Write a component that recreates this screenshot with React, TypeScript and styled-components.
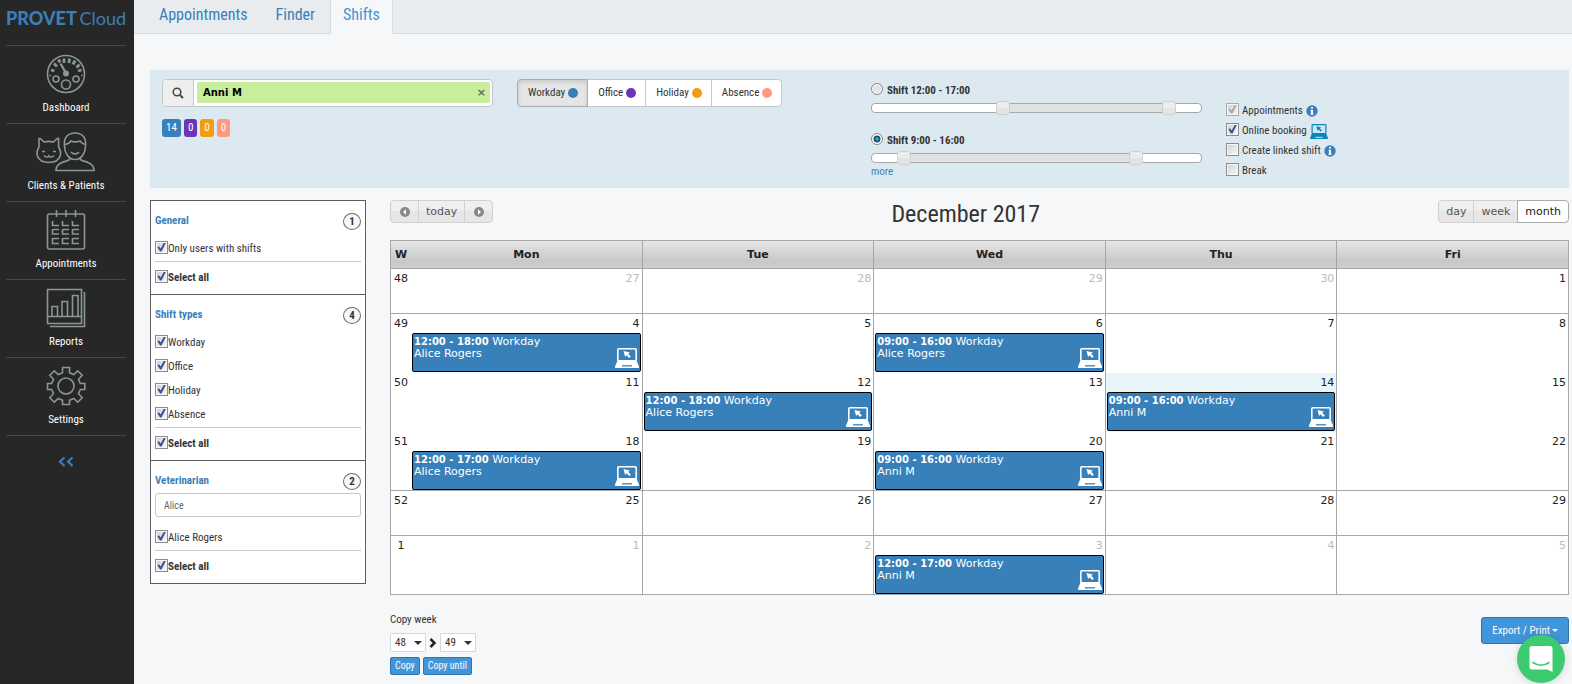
import React, { useState } from "react";
import styled, { createGlobalStyle, css } from "styled-components";

const condensed = '"Roboto Condensed", "Liberation Sans Narrow", Roboto, sans-serif';
const wide = 'Verdana, "DejaVu Sans", sans-serif';

const GlobalStyle = createGlobalStyle`
  *, *::before, *::after { box-sizing: border-box; }
  body { margin: 0; background: #f5f7f9; color: #333; font: 11px/16px ${condensed}; }
  button, input, select { font: inherit; color: inherit; margin: 0; }
  a { color: #3a7fb9; text-decoration: none; }
`;

const Page = styled.div`
  display: flex;
  min-height: 100vh;
`;

/* ---------- sidebar ---------- */

const Sidebar = styled.nav`
  flex: 0 0 134px;
  min-width: 0;
  padding: 0 8px 0 6px;
  background: #272727;
`;

const Logo = styled.a`
  display: flex;
  align-items: center;
  justify-content: space-between;
  height: 45px;
  padding-bottom: 9px;
  font: 900 18px/20px Lato, sans-serif;
`;

const LogoLight = styled.span`
  font-weight: 400;
`;

const NavItem = styled.a`
  display: flex;
  flex-direction: column;
  align-items: center;
  height: 78px;
  padding-top: 8px;
  border-top: 1px solid #484848;
  color: #fff;

  svg { margin-bottom: 6px; }
`;

const Collapse = styled.button`
  display: flex;
  justify-content: center;
  width: 100%;
  padding: 21px 0;
  border: 0;
  border-top: 1px solid #484848;
  background: none;
  color: #3a7fb9;
`;

/* ---------- top tabs ---------- */

const Main = styled.div`
  flex: 1;
  min-width: 0;
`;

const Tabs = styled.div`
  display: flex;
  height: 34px;
  padding-left: 11px;
  border-bottom: 1px solid #dadcde;
  background: #e9ecee;
`;

const Tab = styled.a<{ $active?: boolean }>`
  height: 34px;
  padding: 4px 14px;
  font-size: 16px;
  line-height: 21px;
  ${(p) =>
    p.$active &&
    css`
      margin-left: 1px;
      padding: 4px 12px;
      border: solid #dadcde;
      border-width: 0 1px;
      background: #f5f7f9;
      color: #4295d6;
    `}
`;

const Content = styled.div`
  padding: 36px 3px 8px 16px;
`;

/* ---------- filter bar ---------- */

const FilterBar = styled.section`
  display: flex;
  height: 118px;
  padding: 9px 12px;
  background: #dde9f1;
`;

const SearchColumn = styled.div`
  width: 331px;
  margin-right: 24px;
`;

const SearchGroup = styled.div`
  display: flex;
  height: 28px;
  border: 1px solid #c5c7c9;
  border-radius: 4px;
  background: #fff;
  overflow: hidden;
`;

const SearchAddon = styled.span`
  display: flex;
  align-items: center;
  justify-content: center;
  width: 31px;
  border-right: 1px solid #c5c7c9;
  background: #eee;
`;

const SearchTag = styled.div`
  flex: 1;
  display: flex;
  align-items: center;
  justify-content: space-between;
  margin: 2px 2px 3px 3px;
  padding: 0 4px 0 6px;
  border-radius: 2px;
  background: #c8ed9b;
  color: #000;
  font: bold 10px/16px ${wide};
`;

const TagRemove = styled.button`
  padding: 0;
  border: 0;
  background: none;
  color: #666;
  font: bold 11px/14px ${wide};
`;

const Counters = styled.div`
  display: flex;
  gap: 3px;
  margin-top: 12px;
`;

const Counter = styled.span<{ $color: string }>`
  padding: 1px 4px;
  text-align: center;
  border-radius: 3px;
  background: ${(p) => p.$color};
  color: #fff;
`;

const TypeGroup = styled.div`
  display: flex;
  height: 28px;
`;

const TypeButton = styled.button<{ $active?: boolean }>`
  display: flex;
  align-items: center;
  gap: 3px;
  padding: 0 9px 0 10px;
  border: 1px solid #c5c7c9;
  background: #fff;
  & + & { margin-left: -1px; }
  &:first-child { border-radius: 4px 0 0 4px; }
  &:last-child { border-radius: 0 4px 4px 0; }
  ${(p) =>
    p.$active &&
    css`
      z-index: 1;
      border-color: #a9abad;
      background: #e5e5e5;
      box-shadow: inset 0 2px 4px rgba(0, 0, 0, 0.13);
    `}
`;

const Dot = styled.span<{ $color: string }>`
  width: 10px;
  height: 10px;
  border-radius: 50%;
  background: ${(p) => p.$color};
`;

const ShiftColumn = styled.div`
  width: 331px;
  margin: 0 24px 0 auto;
`;

const ShiftLabel = styled.label`
  display: flex;
  align-items: center;
  gap: 4px;
  height: 24px;
  font-weight: bold;
`;

const Radio = styled.input.attrs({ type: "radio" })`
  appearance: none;
  width: 12px;
  height: 12px;
  margin-bottom: 4px;
  border: 1px solid #888;
  border-radius: 50%;
  background: #e4e4e4;
  box-shadow: inset 0 0 0 1px #fff;
  &:checked {
    background: radial-gradient(circle at 50% 50%, #3ba0cc 0 1px, #0b3c5c 3px, #fff 4px);
  }
`;

const SliderBox = styled.div`
  position: relative;
  height: 10px;
  border: 1px solid #a6a8aa;
  border-radius: 4px;
  background: #fff;
`;

const SliderFill = styled.div`
  height: 8px;
  background: #e1e1e1;
`;

const SliderInput = styled.input.attrs({ type: "range" })`
  appearance: none;
  position: absolute;
  top: -3px;
  left: -8px;
  width: calc(100% + 16px);
  height: 14px;
  background: none;
  pointer-events: none;
  &::-webkit-slider-thumb {
    appearance: none;
    width: 14px;
    height: 14px;
    border: 1px solid #d0d0d0;
    border-radius: 3px;
    background: linear-gradient(#ededed 50%, #e4e4e4 50%);
    pointer-events: auto;
  }
`;

const ShiftRow = styled.div`
  height: 50px;
`;

const MoreLink = styled.a`
  display: block;
  margin-top: -15px;
`;

const OptionColumn = styled.div`
  display: flex;
  flex-direction: column;
  width: 331px;
  padding-top: 22px;
`;

/* ---------- check boxes ---------- */

const CheckLabel = styled.label<{ $bold?: boolean; $spaced?: boolean }>`
  display: flex;
  flex-shrink: 0;
  align-items: center;
  gap: ${(p) => (p.$spaced ? 3 : 0)}px;
  height: ${(p) => (p.$spaced ? 20 : 24)}px;
  font-weight: ${(p) => (p.$bold ? "bold" : "normal")};
`;

const Check = styled.input.attrs({ type: "checkbox" })`
  appearance: none;
  display: flex;
  width: 13px;
  height: 13px;
  margin-bottom: 4px;
  padding: 1px;
  border: 1px solid #8a8c8e;
  background: linear-gradient(135deg, #cfd3da, #f6f6f6) content-box, #f7f7f7;
  &:checked::after {
    content: "";
    width: 9px;
    height: 9px;
    background: #3c5096;
    clip-path: polygon(4% 52%, 22% 42%, 40% 66%, 78% 0, 100% 0, 50% 100%, 34% 100%);
  }
  &:disabled { border-color: #aaa; }
  &:disabled::after { background: #aaa; }
`;

/* ---------- left panel ---------- */

const Columns = styled.div`
  display: flex;
  align-items: flex-start;
  gap: 24px;
  margin-top: 12px;
`;

const Panel = styled.aside`
  flex: 0 0 216px;
  border: 1px solid #5c5e60;
  background: #fff;
`;

const PanelSection = styled.section`
  padding: 10px 4px 4px;
  & + & { border-top: 1px solid #5c5e60; }
`;

const PanelHeading = styled.div`
  display: flex;
  align-items: center;
  justify-content: space-between;
  height: 20px;
  margin-bottom: 6px;
`;

const PanelTitle = styled.h2`
  margin: 0;
  color: #3a7fb9;
  font-size: 11px;
`;

const Count = styled.span`
  width: 18px;
  height: 17px;
  border: 1px solid #6b6b6b;
  border-radius: 50%;
  background: #f8f8f8;
  font-weight: bold;
  line-height: 15px;
  text-align: center;
`;

const PanelInput = styled.input`
  display: block;
  width: 100%;
  height: 24px;
  margin: -4px 0 9px;
  padding: 0 8px;
  border: 1px solid #c5c7c9;
  border-radius: 3px;
  background: #fff;
  color: #666;
  font-size: 10px;
`;

const Divider = styled.hr`
  margin: 0 0 4px;
  border: 0;
  border-top: 1px solid #c8c8c8;
`;

/* ---------- calendar ---------- */

const CalendarArea = styled.main`
  flex: 1;
  min-width: 0;
`;

const CalendarHeader = styled.header`
  display: flex;
  justify-content: space-between;
  height: 40px;
`;

const CalendarTitle = styled.h1`
  margin: 0;
  font-size: 24px;
  font-weight: normal;
  line-height: 28px;
`;

const ButtonSet = styled.div`
  display: flex;
  height: 23px;
`;

const SetButton = styled.button<{ $active?: boolean }>`
  padding: 0 7px;
  border: 1px solid #d0d0d0;
  background: linear-gradient(#efefef 50%, #e6e6e6 50%);
  color: #555;
  font: 11px/20px ${wide};
  & + & { margin-left: -1px; }
  &:first-child { border-radius: 4px 0 0 4px; }
  &:last-child { border-radius: 0 4px 4px 0; }
  ${(p) =>
    p.$active &&
    css`
      border-color: #aaa;
      background: #fff;
      color: #212121;
    `}
`;

const Arrow = styled(SetButton)`
  display: flex;
  align-items: center;
  justify-content: center;
  width: 29px;
`;

const Calendar = styled.table`
  width: 100%;
  table-layout: fixed;
  border: 1px solid #a5a7a9;
  border-width: 1px 0 0 1px;
  border-spacing: 0;
  background: #fff;
  font: 11px/16px ${wide};
`;

const HeadCell = styled.th<{ $week?: boolean }>`
  width: ${(p) => (p.$week ? "20px" : "auto")};
  height: 28px;
  padding: 0 ${(p) => (p.$week ? 3 : 0)}px;
  border: solid #a5a7a9;
  border-width: 0 ${(p) => (p.$week ? 0 : 1)}px 1px 0;
  background: linear-gradient(#e6e6e6, #c8c8c8 75%, #cfcfcf);
  color: #222;
`;

const WeekCell = styled.td<{ $line: boolean }>`
  padding: 2px 0 0;
  border-bottom: ${(p) => (p.$line ? "1px solid #a5a7a9" : "0")};
  color: #222;
  text-align: center;
  vertical-align: top;
`;

const DayCell = styled.td<{ $line: boolean; $today?: boolean; $tall: boolean }>`
  height: ${(p) => (p.$tall ? 59 : 45)}px;
  padding: 2px 1px 0;
  border: solid #a5a7a9;
  border-width: 0 1px ${(p) => (p.$line ? 1 : 0)}px 0;
  background: ${(p) => (p.$today ? "#e8f6fa" : "#fff")};
  vertical-align: top;
`;

const DayNumber = styled.div<{ $muted: boolean }>`
  height: 17px;
  padding-right: 1px;
  color: ${(p) => (p.$muted ? "#bbb" : "#222")};
  text-align: right;
`;

const Event = styled.a`
  display: flex;
  justify-content: space-between;
  height: 39px;
  padding: 2px 1px 0;
  border: 1px solid #000;
  border-radius: 2px;
  background: #3880ba;
  color: #fff;
  line-height: 12px;

  svg { align-self: flex-end; margin-bottom: 3px; }
`;

const EventTime = styled.b`
  font-size: 10px;
`;

const Footer = styled.footer`
  display: flex;
  justify-content: space-between;
  align-items: flex-start;
  padding-top: 17px;
`;

const ExportSlot = styled.div`
  padding-top: 5px;
`;

const CopyRow = styled.div`
  display: flex;
  align-items: center;
  gap: 3px;
  margin-top: 5px;
`;

const WeekSelect = styled.div`
  position: relative;
  display: flex;

  select {
    appearance: none;
    width: 36px;
    height: 19px;
    padding: 0 4px;
    border: 1px solid #d6d8da;
    border-radius: 1px;
    background: #fff;
  }
  svg { position: absolute; right: 4px; top: 8px; pointer-events: none; }
`;

const BlueButton = styled.button<{ $large?: boolean }>`
  display: flex;
  align-items: center;
  gap: 2px;
  height: ${(p) => (p.$large ? 27 : 18)}px;
  padding: 0 ${(p) => (p.$large ? 10 : 4)}px;
  border: 1px solid #2e76b0;
  border-radius: ${(p) => (p.$large ? 3 : 2)}px;
  background: #4295d9;
  color: #fff;
  font-size: ${(p) => (p.$large ? 11 : 10)}px;
`;

const ChatButton = styled.button`
  position: fixed;
  right: 7px;
  bottom: 1px;
  display: flex;
  align-items: center;
  justify-content: center;
  width: 48px;
  height: 48px;
  padding: 0;
  border: 0;
  border-radius: 50%;
  background: #3ecb70;
  box-shadow: 0 1px 8px rgba(0, 0, 0, 0.15);
`;

/* ---------- drawings ---------- */

const line = { fill: "none", stroke: "#8b9696", strokeWidth: 1.6 };

const DashboardIcon = () => (
  <svg width="40" height="40" viewBox="0 0 40 40" {...line}>
    <circle cx="20" cy="20" r="18.5" />
    <circle cx="20" cy="30.5" r="4.5" />
    <circle cx="10" cy="25" r="3" />
    <circle cx="30" cy="25" r="3" />
    <circle cx="20" cy="19.500" r="2.200" fill="#8b9696" />
    <path d="M20.500 20 14.500 9.500" strokeWidth="2.200" />
    <path d="M18 4.500v4.500M23.500 4.500l-.5 4.500M12.500 5.500l1.500 3M29 6.500l-2 4M8 9.500l3 3M33.500 10.500l-3 3M5 16l3.500 1M35.500 16l-3.500 1" strokeWidth="2.800" />
    <path d="M3.500 21.500h1.500M35 21.500h1.500" />
  </svg>
);

const ClientsIcon = () => (
  <svg width="60" height="40" viewBox="0 0 60 40" {...line}>
    <path d="M3 7c0-.8.700-1 1.300-.5l4 3.500c3-.9 6-.9 9 0l4-3.500c.600-.5 1.300-.3 1.300.5v8c2 3 2.500 6 1.500 9-1.500 4.500-6 6.500-11 6.500S3 28.500 1.500 24c-1-3-.5-6 1.500-9z" />
    <path d="M6 19.500h3M17 19.500h3M8 23.500c1.500 2 4 2 5 .3 1 1.700 3.500 1.700 5-.3" />
    <path d="M28.500 14c-1-8 3-13 10.500-13s11.500 5 10.500 13c0 6-3.500 13.500-10.500 13.500S28.500 20 28.500 14z" />
    <path d="M28.500 12.500c3 0 5-1.500 6.500-3.500 3 1.200 6 1.200 9 0 1.500 2 3 3 5.500 3.500M35 20c2 2.500 6 2.500 8 0" />
    <path d="M34 26.500c-.5 2.500-5 2.500-9 4.500-3.500 1.700-5 4-5 7.500h38c0-3.500-1.500-5.800-5-7.500-4-2-8.500-2-9-4.500" />
  </svg>
);

const CalendarIcon = () => (
  <svg width="40" height="40" viewBox="0 0 40 40" {...line}>
    <rect x="1.500" y="4" width="37" height="35" rx="2" />
    <path d="M10.500 0v7M20 0v7M29.500 0v7" />
    <path d="M6.500 11v4.500h6.500M16.500 11v4.500H23M26.500 11v4.500H33M6.500 19v5h6.500M16.500 19v5H23M26.500 19v5H33M6.500 28v5.500h6.500M16.500 28v5.500H23M26.500 28v5.500H33M7 19.500h6M17 19.500h6M27 19.500h6M7 28.500h6M17 28.500h6M27 28.500h6" />
  </svg>
);

const ReportsIcon = () => (
  <svg width="40" height="40" viewBox="0 0 40 40" {...line}>
    <path d="M1.500 1.500h34v34h-34zM1.500 28.500h34M38.500 4v34.500H4" />
    <path d="M6 28V18.500h5.500V28M16 28V13.500h5.500V28M26.500 28V7.500H32V28" />
  </svg>
);

const SettingsIcon = () => (
  <svg width="40" height="40" viewBox="0 0 40 40" {...line}>
    <circle cx="20" cy="20" r="8" />
    <path d="M16.500 1.500h7v5.200l4.200 1.800 4-3.700 4.500 4.500-3.700 4 1.800 4.200h4.500v6h-4.500l-1.800 4.200 3.700 4-4.500 4.500-4-3.700-4.200 1.800v4.200h-7v-4.200l-4.200-1.800-4 3.700-4.500-4.500 3.700-4-1.800-4.200H1.500v-6h4.200l1.800-4.200-3.700-4 4.500-4.500 4 3.700 4.200-1.800z" />
  </svg>
);

const LaptopIcon = ({ color, back, width = 24 }: { color: string; back: string; width?: number }) => (
  <svg width={width} height={(width * 5) / 6} viewBox="0 0 24 20" role="img" aria-label="Online booking">
    <rect x="2.800" y=".8" width="18.400" height="12" rx="1" fill={back} stroke={color} strokeWidth="1.600" />
    <path d="M2.500 12.500h19L24 18.500q.300 1.500-1 1.500H1q-1.300 0-1-1.500z" fill={color} />
    <path d="m8.500 3 6.500 1.500-1.800 1.300 2.600 2.700-1.700 1.500-2.500-2.800-1.500 1.700z" fill={color} />
    <path d="M7 17.800h10" stroke={back} strokeWidth="1.300" />
  </svg>
);

const InfoIcon = () => (
  <svg width="12" height="12" viewBox="0 0 12 12" role="img" aria-label="Info">
    <circle cx="6" cy="6" r="5.700" fill="#3a7fb9" />
    <path d="M5 2h2v1.500H5zM4.500 4.800H7V8.500h.700v1.200H4.300V8.500H5V6h-.5z" fill="#fff" />
  </svg>
);

const SearchIcon = () => (
  <svg width="12" height="12" viewBox="0 0 12 12" fill="none" stroke="#444">
    <circle cx="5" cy="5" r="3.800" strokeWidth="1.500" />
    <path d="m8 8 3 3" strokeWidth="2" />
  </svg>
);

const ArrowIcon = ({ flip }: { flip?: boolean }) => (
  <svg width="12" height="12" viewBox="0 0 12 12">
    <circle cx="6" cy="6" r="5" fill="#888" />
    <path d={flip ? "M5 3.200 8 6 5 8.800z" : "M7 3.200 4 6l3 2.800z"} fill="#fff" />
  </svg>
);

const Caret = ({ size }: { size: number }) => (
  <svg width={size} height={size / 2} viewBox="0 0 8 4">
    <path d="M0 0h8L4 4z" fill="currentColor" />
  </svg>
);

/* ---------- data ---------- */

const navItems = [
  { name: "Dashboard", Icon: DashboardIcon },
  { name: "Clients & Patients", Icon: ClientsIcon },
  { name: "Appointments", Icon: CalendarIcon },
  { name: "Reports", Icon: ReportsIcon },
  { name: "Settings", Icon: SettingsIcon },
];

const shiftTypes = [
  { name: "Workday", color: "#3880ba", count: 14 },
  { name: "Office", color: "#6a36b8", count: 0 },
  { name: "Holiday", color: "#f39c12", count: 0 },
  { name: "Absence", color: "#ff9980", count: 0 },
];

type Shift = { time: string; who: string };
type Week = { no: number; days: number[]; line: boolean; muted?: number[]; shifts?: Record<number, Shift> };

const weeks: Week[] = [
  { no: 48, days: [27, 28, 29, 30, 1], line: true, muted: [27, 28, 29, 30] },
  {
    no: 49, days: [4, 5, 6, 7, 8], line: false,
    shifts: { 4: { time: "12:00 - 18:00", who: "Alice Rogers" }, 6: { time: "09:00 - 16:00", who: "Alice Rogers" } },
  },
  {
    no: 50, days: [11, 12, 13, 14, 15], line: false,
    shifts: { 12: { time: "12:00 - 18:00", who: "Alice Rogers" }, 14: { time: "09:00 - 16:00", who: "Anni M" } },
  },
  {
    no: 51, days: [18, 19, 20, 21, 22], line: true,
    shifts: { 18: { time: "12:00 - 17:00", who: "Alice Rogers" }, 20: { time: "09:00 - 16:00", who: "Anni M" } },
  },
  { no: 52, days: [25, 26, 27, 28, 29], line: true },
  {
    no: 1, days: [1, 2, 3, 4, 5], line: true, muted: [1, 2, 3, 4, 5],
    shifts: { 3: { time: "12:00 - 17:00", who: "Anni M" } },
  },
];

/* ---------- parts ---------- */

const ShiftSlider = ({ start, end }: { start: number; end: number }) => {
  const [range, setRange] = useState([start, end]);
  return (
    <SliderBox>
      <SliderFill style={{ marginLeft: `${(range[0] - 8) * 10}%`, width: `${(range[1] - range[0]) * 10}%` }} />
      <SliderInput min={8} max={18} value={range[0]} aria-label="Start"
        onChange={(e) => setRange([Math.min(+e.target.value, range[1]), range[1]])} />
      <SliderInput min={8} max={18} value={range[1]} aria-label="End"
        onChange={(e) => setRange([range[0], Math.max(+e.target.value, range[0])])} />
    </SliderBox>
  );
};

const CheckItem = ({ children, bold }: { children: React.ReactNode; bold?: boolean }) => (
  <CheckLabel $bold={bold}>
    <Check defaultChecked />
    {children}
  </CheckLabel>
);

const PanelHead = ({ title, count }: { title: string; count: number }) => (
  <PanelHeading>
    <PanelTitle>{title}</PanelTitle>
    <Count>{count}</Count>
  </PanelHeading>
);

const WeekPicker = ({ value, label }: { value: string; label: string }) => (
  <WeekSelect>
    <select defaultValue={value} aria-label={label}>
      {["48", "49", "50", "51", "52"].map((w) => <option key={w}>{w}</option>)}
    </select>
    <Caret size={8} />
  </WeekSelect>
);

export default function App() {
  return (
    <>
      <GlobalStyle />
      <Page>
        <Sidebar>
          <Logo href="#">PROVET <LogoLight>Cloud</LogoLight></Logo>
          {navItems.map(({ name, Icon }) => (
            <NavItem href="#" key={name}><Icon />{name}</NavItem>
          ))}
          <Collapse aria-label="Collapse menu">
            <svg width="16" height="10" viewBox="0 0 16 10" fill="none" stroke="currentColor" strokeWidth="2.200">
              <path d="M6.500.500 2 4.500l4.500 4.500M14.500.500 10 4.500l4.500 4.500" />
            </svg>
          </Collapse>
        </Sidebar>

        <Main>
          <Tabs>
            <Tab href="#">Appointments</Tab>
            <Tab href="#">Finder</Tab>
            <Tab href="#" $active>Shifts</Tab>
          </Tabs>

          <Content>
            <FilterBar>
              <SearchColumn>
                <SearchGroup>
                  <SearchAddon><SearchIcon /></SearchAddon>
                  <SearchTag>Anni M<TagRemove aria-label="Remove">×</TagRemove></SearchTag>
                </SearchGroup>
                <Counters>
                  {shiftTypes.map((t) => <Counter key={t.name} $color={t.color}>{t.count}</Counter>)}
                </Counters>
              </SearchColumn>

              <TypeGroup>
                {shiftTypes.map((t, i) => (
                  <TypeButton key={t.name} $active={i === 0}>{t.name}<Dot $color={t.color} /></TypeButton>
                ))}
              </TypeGroup>

              <ShiftColumn>
                <ShiftRow>
                  <ShiftLabel><Radio name="shift" />Shift 12:00 - 17:00</ShiftLabel>
                  <ShiftSlider start={12} end={17} />
                </ShiftRow>
                <ShiftRow>
                  <ShiftLabel><Radio name="shift" defaultChecked />Shift 9:00 - 16:00</ShiftLabel>
                  <ShiftSlider start={9} end={16} />
                </ShiftRow>
                <MoreLink href="#">more</MoreLink>
              </ShiftColumn>

              <OptionColumn>
                <CheckLabel $spaced><Check defaultChecked disabled />Appointments <InfoIcon /></CheckLabel>
                <CheckLabel $spaced><Check defaultChecked />Online booking <LaptopIcon width={18} color="#0b86b8" back="#cfe6f0" /></CheckLabel>
                <CheckLabel $spaced><Check />Create linked shift <InfoIcon /></CheckLabel>
                <CheckLabel $spaced><Check />Break</CheckLabel>
              </OptionColumn>
            </FilterBar>

            <Columns>
              <Panel>
                <PanelSection>
                  <PanelHead title="General" count={1} />
                  <CheckItem>Only users with shifts</CheckItem>
                  <Divider />
                  <CheckItem bold>Select all</CheckItem>
                </PanelSection>
                <PanelSection>
                  <PanelHead title="Shift types" count={4} />
                  {shiftTypes.map((t) => <CheckItem key={t.name}>{t.name}</CheckItem>)}
                  <Divider />
                  <CheckItem bold>Select all</CheckItem>
                </PanelSection>
                <PanelSection>
                  <PanelHead title="Veterinarian" count={2} />
                  <PanelInput defaultValue="Alice" aria-label="Veterinarian" />
                  <CheckItem>Alice Rogers</CheckItem>
                  <Divider />
                  <CheckItem bold>Select all</CheckItem>
                </PanelSection>
              </Panel>

              <CalendarArea>
                <CalendarHeader>
                  <ButtonSet>
                    <Arrow aria-label="Previous"><ArrowIcon /></Arrow>
                    <SetButton>today</SetButton>
                    <Arrow aria-label="Next"><ArrowIcon flip /></Arrow>
                  </ButtonSet>
                  <CalendarTitle>December 2017</CalendarTitle>
                  <ButtonSet>
                    <SetButton>day</SetButton>
                    <SetButton>week</SetButton>
                    <SetButton $active>month</SetButton>
                  </ButtonSet>
                </CalendarHeader>

                <Calendar>
                  <thead>
                    <tr>
                      <HeadCell $week>W</HeadCell>
                      {["Mon", "Tue", "Wed", "Thu", "Fri"].map((d) => <HeadCell key={d}>{d}</HeadCell>)}
                    </tr>
                  </thead>
                  <tbody>
                    {weeks.map((week) => (
                      <tr key={week.no}>
                        <WeekCell $line={week.line}>{week.no}</WeekCell>
                        {week.days.map((day) => {
                          const shift = week.shifts?.[day];
                          return (
                            <DayCell key={day} $line={week.line} $tall={!!week.shifts} $today={week.no === 50 && day === 14}>
                              <DayNumber $muted={!!week.muted?.includes(day)}>{day}</DayNumber>
                              {shift && (
                                <Event href="#">
                                  <span><EventTime>{shift.time}</EventTime> Workday<br />{shift.who}</span>
                                  <LaptopIcon color="#fff" back="#3880ba" />
                                </Event>
                              )}
                            </DayCell>
                          );
                        })}
                      </tr>
                    ))}
                  </tbody>
                </Calendar>

                <Footer>
                  <div>
                    Copy week
                    <CopyRow>
                      <WeekPicker value="48" label="From week" />
                      <svg width="8" height="10" viewBox="0 0 8 10" fill="none" stroke="#222" strokeWidth="2.500">
                        <path d="m1.500 1 4 4-4 4" />
                      </svg>
                      <WeekPicker value="49" label="To week" />
                    </CopyRow>
                    <CopyRow>
                      <BlueButton>Copy</BlueButton>
                      <BlueButton>Copy until</BlueButton>
                    </CopyRow>
                  </div>
                  <ExportSlot>
                    <BlueButton $large>Export / Print <Caret size={6} /></BlueButton>
                  </ExportSlot>
                </Footer>
              </CalendarArea>
            </Columns>
          </Content>
        </Main>
      </Page>
      <ChatButton aria-label="Open chat">
        <svg width="24" height="27" viewBox="0 0 24 27">
          <path d="M3 0h18q2.500 0 2.500 2.500V26l-5-2.500H3Q.500 23.500.500 21V2.500Q.500 0 3 0z" fill="#fff" />
          <path d="M4 16.500q8 5.500 16 0" fill="none" stroke="#3ecb70" strokeWidth="1.600" strokeLinecap="round" />
        </svg>
      </ChatButton>
    </>
  );
}
